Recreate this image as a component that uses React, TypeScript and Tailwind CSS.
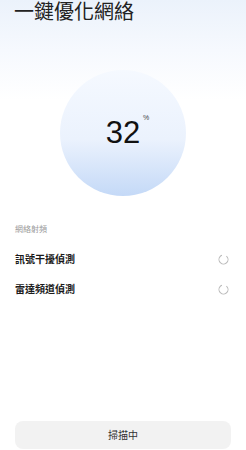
import React from 'react';

const checks = ["訊號干擾偵測", "雷達頻道偵測"];

function Spinner() {
  return (
    <svg width="11" height="11" viewBox="0 0 11 11" className="shrink-0">
      <circle
        cx="5.5"
        cy="5.5"
        r="4.5"
        fill="none"
        stroke="#b9b9b9"
        strokeWidth="1"
        strokeDasharray="23 5.3"
        transform="rotate(-50 5.5 5.5)"
      />
    </svg>
  );
}

export default function App() {
  return (
    <div
      className="w-[246px] h-[450px] flex flex-col bg-[linear-gradient(180deg,#ebf2fb_0px,#f6f9fe_50px,#ffffff_100px)] text-[#222]"
      style={{ fontFamily: '"Liberation Sans", "Noto Sans CJK TC", sans-serif' }}
    >
      <h1 className="px-[14px] h-[24px] text-[20px] leading-[24px] font-normal">一鍵優化網絡</h1>

      <div className="mt-[46px] mx-auto w-[126px] h-[126px] rounded-full bg-[linear-gradient(180deg,#f5f9ff_0%,#ebf2fd_55%,#c4d9f7_100%)] flex items-center justify-center">
        <div className="relative">
          <span className="text-[31px] leading-[32px] text-[#111]">32</span>
          <span className="absolute -right-[9px] -top-[3px] text-[7px] leading-[8px] text-[#444]">%</span>
        </div>
      </div>

      <div className="px-[15px]">
        <div className="mt-[28px] text-[8px] leading-[12px] text-[#9a9a9a]">網絡射頻</div>
        <div className="mt-[8px]">
          {checks.map((c) => (
            <div key={c} className="h-[30px] flex items-center justify-between pr-[2px]">
              <span className="text-[10px] font-bold text-[#1a1a1a]">{c}</span>
              <Spinner />
            </div>
          ))}
        </div>
      </div>

      <div className="flex-1" />

      <button className="mx-[15px] mb-[1px] h-[28px] rounded-[8px] bg-[#f2f2f2] text-[10px] text-[#333] flex items-center justify-center">
        掃描中
      </button>
    </div>
  );
}
